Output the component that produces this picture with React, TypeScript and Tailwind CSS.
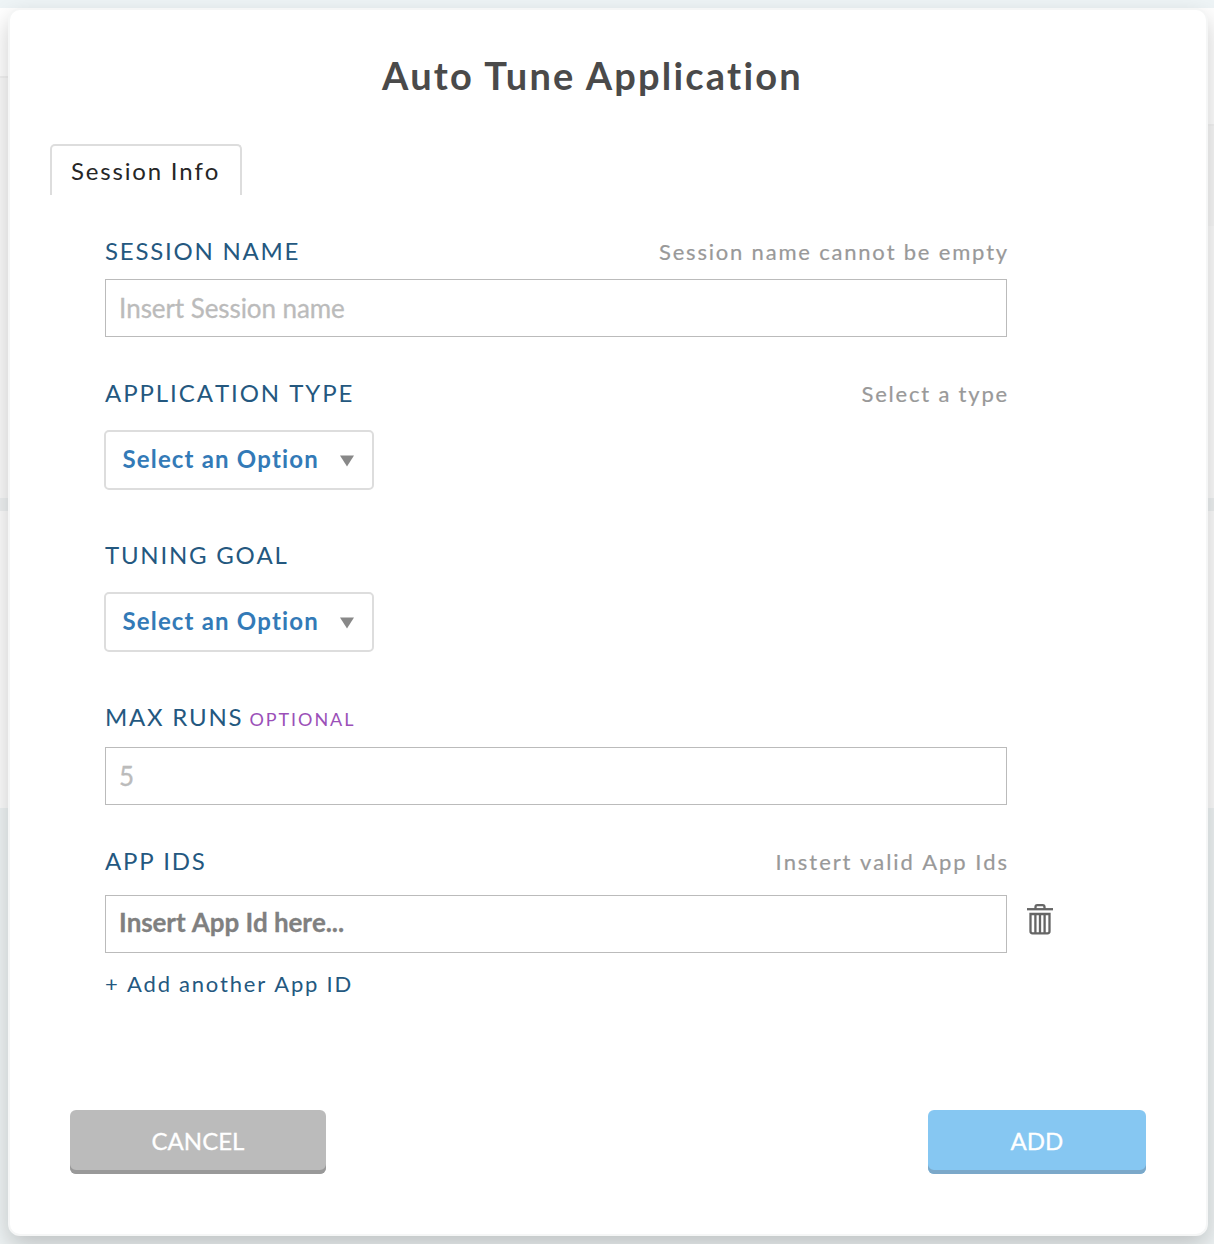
import React from "react";

function Field({ label, hint, optional, spacing = "tracking-[1.76px]", hintSpacing = "tracking-[1.8px]" }: { label: string; hint?: string; optional?: boolean; spacing?: string; hintSpacing?: string }) {
  return (
    <div className="ml-px flex h-[29px] w-[904px] items-baseline justify-between leading-[29px]">
      <label className={`text-[24px] whitespace-pre text-[#24587f] ${spacing}`}>
        {label}
        {optional && <span className="ml-[6px] text-[18px] tracking-[1.95px] text-[#9b50b8]">OPTIONAL</span>}
      </label>
      {hint && <span className={`text-[22px] text-[#999999] [-webkit-text-stroke:0.2px] ${hintSpacing}`}>{hint}</span>}
    </div>
  );
}

function Select() {
  return (
    <button className="flex h-[60px] w-[270px] items-center rounded-[5px] border-2 border-[#dddddd] bg-white pb-[3px] pl-[16.5px]">
      <span className="w-[216.5px] text-left text-[24px] leading-[29px] font-bold tracking-[1.15px] text-[#337ab7]">Select an Option</span>
      <svg className="mt-[5px]" width="16" height="12" viewBox="0 0 16 12">
        <path d="M1 .5h14L8 11.5z" fill="#888888" />
      </svg>
    </button>
  );
}

function TrashIcon() {
  return (
    <svg width="26" height="31" viewBox="0 0 26 31" fill="none" stroke="#666666" strokeWidth="2.3">
      <path d="M0 5.2h26" />
      <path d="M8.5 5V3Q8.5 1.2 10.3 1.2h5.4Q17.5 1.2 17.5 3v2" />
      <path d="M3.5 10h19v17.3q0 2-2 2h-15q-2 0-2-2z" />
      <path d="M8.4 10v19M13 10v19M17.6 10v19" />
    </svg>
  );
}

const input =
  "block h-[58px] w-[902px] border border-[#bbbbbb] bg-white px-[13px] text-[26px] tracking-[-0.08px] outline-none [-webkit-text-stroke:0.3px]";

export default function App() {
  return (
    <div className="relative h-[1244px] w-[1214px] overflow-hidden bg-[#eef3f4] font-[Lato,sans-serif] [font-kerning:none]">
      <div className="flex h-full flex-col">
        <div className="h-2 bg-[#eef4f6]" />
        <div className="flex h-[490px] justify-between">
          <div className="flex w-1/2 flex-col bg-[#fafafa]">
            <div className="h-[70px] border-b-2 border-[#f2f2f2] bg-white" />
          </div>
          <div className="flex w-1/2 flex-col bg-[#fcfcfc]">
            <div className="h-[118px] border-b-2 border-[#f4f4f4] bg-white" />
            <div className="h-[100px] bg-[#f8f8f8]" />
          </div>
        </div>
        <div className="h-[13px] bg-[#eef1f2]" />
        <div className="h-[297px] bg-[#fcfcfc]" />
      </div>

      <div className="absolute top-2 left-2 h-[1228px] w-[1200px] rounded-[12px] border-2 border-[#f5f6f6] bg-white shadow-[0_10px_24px_rgba(0,0,0,0.2)]">
        <h1 className="mt-[42px] pr-[31px] text-center text-[38px] leading-[46px] font-bold tracking-[2.2px] text-[#4a4a4a] [font-kerning:normal]">
          Auto Tune Application
        </h1>
        <div className="mt-[46px] ml-10 h-[51px] w-[192px] rounded-t-[5px] border-2 border-b-0 border-[#dddddd] pt-[10px] pl-[19px] text-[24px] leading-[29px] tracking-[1.8px] text-[#262626]">
          Session Info
        </div>

        <div className="mt-[41px] ml-[94px]">
          <Field label="SESSION NAME" hint="Session name cannot be empty" />
          <input className={`${input} mt-[14px] ml-px placeholder:text-[#bbbbbb]`} placeholder="Insert Session name" />
          <div className="mt-[41px]">
            <Field label="APPLICATION TYPE" hint="Select a type" spacing="tracking-[1.93px]" />
          </div>
          <div className="mt-[23px]">
            <Select />
          </div>
          <div className="mt-[50px]">
            <Field label="TUNING GOAL" />
          </div>
          <div className="mt-[23px]">
            <Select />
          </div>
          <div className="mt-[50px]">
            <Field label="MAX RUNS" optional />
          </div>
          <input className={`${input} mt-4 ml-px placeholder:text-[#bbbbbb]`} placeholder="5" />
          <div className="mt-[41px]">
            <Field label="APP IDS" hint="Instert valid App Ids" hintSpacing="tracking-[1.93px]" />
          </div>
          <div className="mt-5 ml-px flex">
            <input className={`${input} pb-1 font-bold placeholder:text-[#808080]`} placeholder="Insert App Id here..." />
            <button className="mt-[9px] ml-5 h-[31px]">
              <TrashIcon />
            </button>
          </div>
          <button className="mt-[18px] ml-px block text-[22px] leading-[26px] tracking-[1.76px] text-[#24587f]">+ Add another App ID</button>
        </div>

        <div className="mt-[113px] flex justify-between px-[60px] [-webkit-text-stroke:0.3px]">
          <button className="h-16 w-64 rounded-[6px] bg-[#bbbbbb] pb-1 text-[24px] leading-[29px] text-white shadow-[inset_0_-4px_0_#999999]">CANCEL</button>
          <button className="h-16 w-[218px] rounded-[6px] bg-[#86c7f2] pb-1 text-[24px] leading-[29px] text-white shadow-[inset_0_-4px_0_#7ba8c9]">ADD</button>
        </div>
      </div>
    </div>
  );
}
